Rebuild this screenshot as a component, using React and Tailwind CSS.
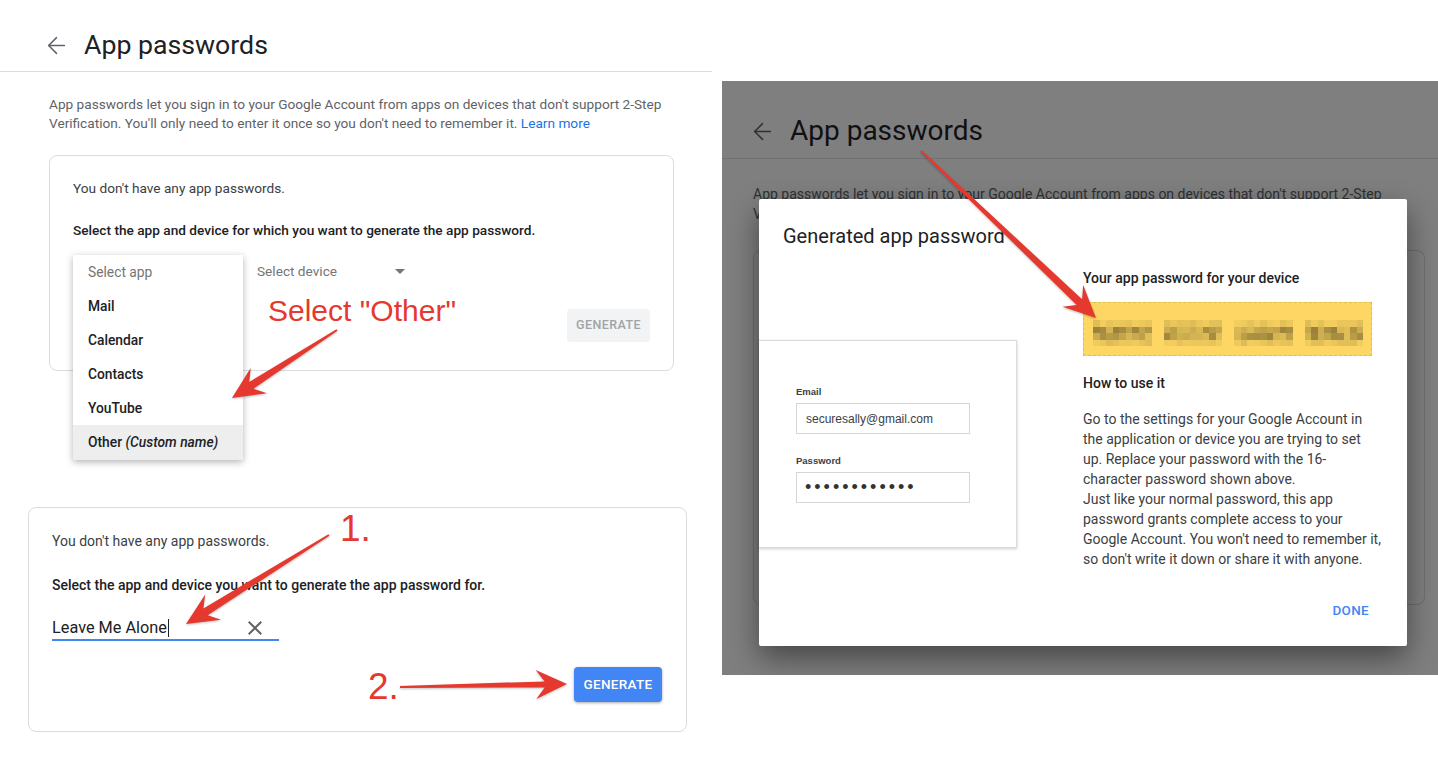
import React from 'react';
import { ArrowLeft } from 'lucide-react';

const RED = '#e5392f';

// Preview-style annotation arrow: thin tail widening to a swept-back head
const arrowPoints = ({ from, to, head = 30, wing = 28, tail = 2, neck = 6 }) => {
  const [x1, y1] = from;
  const [x2, y2] = to;
  const len = Math.hypot(x2 - x1, y2 - y1);
  const ux = (x2 - x1) / len;
  const uy = (y2 - y1) / len;
  const nx = -uy;
  const ny = ux;
  const at = (d, w) => [x2 - ux * d + nx * w, y2 - uy * d + ny * w];
  const pts = [
    [x1 + (nx * tail) / 2, y1 + (ny * tail) / 2],
    at(head * 0.72, neck / 2),
    at(head, wing / 2),
    [x2, y2],
    at(head, -wing / 2),
    at(head * 0.72, -neck / 2),
    [x1 - (nx * tail) / 2, y1 - (ny * tail) / 2],
  ];
  return pts.map((p) => p.map((v) => v.toFixed(1)).join(',')).join(' ');
};

const arrows = [
  { from: [337, 330], to: [232, 398], head: 32, wing: 30, neck: 8 },
  { from: [329, 535], to: [186, 624], head: 32, wing: 30, neck: 8 },
  { from: [400, 687], to: [567, 684], head: 31, wing: 29, neck: 6 },
  { from: [921, 151], to: [1096, 318], head: 32, wing: 30, neck: 8 },
];

// pixelated stand-in for the blurred password
const mosaic = Array.from({ length: 4 }, (_, g) =>
  Array.from({ length: 36 }, (_, i) => {
    const row = Math.floor(i / 9);
    const s = Math.sin((g * 36 + i + 1) * 12.9898) * 43758.5453;
    const rnd = s - Math.floor(s);
    const edge = row === 0 || row === 3;
    const t = edge ? 0.06 + rnd * 0.14 : 0.18 + rnd * 0.45;
    const mix = (a, b) => Math.round(a + (b - a) * t);
    return `rgb(${mix(253, 95)}, ${mix(214, 80)}, ${mix(99, 35)})`;
  })
);

const CloseIcon = () => (
  <svg width="24" height="24" viewBox="0 0 24 24" fill="#5f6368">
    <path d="M19 6.41L17.59 5 12 10.59 6.41 5 5 6.41 10.59 12 5 17.59 6.41 19 12 13.41 17.59 19 19 17.59 13.41 12z" />
  </svg>
);

const LeftPage = () => (
  <div className="w-[712px] shrink-0">
    {/* Header */}
    <div className="h-[72px] border-b border-[#dadce0] pt-[29px] pl-[43px]">
      <div className="flex items-center h-[32px]">
        <ArrowLeft size={27} strokeWidth={1.3} color="#5f6368" />
        <h1 className="ml-[14px] text-[26.7px] leading-[32px] text-[#202124]">App passwords</h1>
      </div>
    </div>

    <p className="mt-[23px] px-[49px] text-[13.65px] leading-[19px] text-[#5f6368] whitespace-nowrap">
      App passwords let you sign in to your Google Account from apps on devices that don't support 2-Step
      <br />
      Verification. You'll only need to enter it once so you don't need to remember it.{' '}
      <span className="text-[#1a73e8]">Learn more</span>
    </p>

    {/* Card with open app menu */}
    <div className="relative ml-[49px] mt-[22px] w-[625px] h-[216px] border border-[#dadce0] rounded-[8px] pl-[23px] pt-[23px]">
      <p className="text-[13.65px] leading-[19px] text-[#3c4043]">You don't have any app passwords.</p>
      <p className="mt-[23px] text-[13.65px] leading-[19px] font-medium text-[#202124]">
        Select the app and device for which you want to generate the app password.
      </p>
      <div className="mt-[22px] flex items-center h-[19px] text-[13.65px]">
        <div className="w-[184px]" />
        <span className="w-[138px] text-[#757575]">Select device</span>
        <svg width="10" height="5" viewBox="0 0 10 5">
          <polygon points="0,0 10,0 5,5" fill="#757575" />
        </svg>
      </div>
      <div className="mt-[28px] flex justify-end pr-[23px]">
        <button className="w-[83px] h-[33px] rounded-[4px] bg-[#f1f3f4] text-[#a0a4a8] text-[12.5px] font-medium tracking-[0.4px]">
          GENERATE
        </button>
      </div>

      <div className="absolute left-[23px] top-[99px] w-[170px] bg-white shadow-[0_2px_7px_rgba(0,0,0,0.3)] text-[13.8px]">
        <div className="h-[34px] flex items-center pl-[15px] text-[#757575]">Select app</div>
        {['Mail', 'Calendar', 'Contacts', 'YouTube'].map((item) => (
          <div key={item} className="h-[34px] flex items-center pl-[15px] font-medium text-[#202124]">
            {item}
          </div>
        ))}
        <div className="h-[35px] flex items-center pl-[15px] font-medium text-[#202124] bg-[#eeeeee]">
          Other&nbsp;<span className="italic">(Custom name)</span>
        </div>
      </div>
    </div>

    {/* Card with custom name */}
    <div className="ml-[28px] mt-[136px] w-[659px] h-[225px] border border-[#dadce0] rounded-[8px] pl-[23px] pt-[24px]">
      <p className="text-[14px] leading-[19px] text-[#3c4043]">You don't have any app passwords.</p>
      <p className="mt-[25px] text-[14px] leading-[19px] font-medium text-[#202124]">
        Select the app and device you want to generate the app password for.
      </p>
      <div className="mt-[22px] w-[227px] h-[24px] border-b-2 border-[#4285f4] flex items-center justify-between pr-[12px]">
        <div className="flex items-center text-[16.3px] leading-[22px] text-[#202124]">
          Leave Me Alone
          <span className="ml-[1px] w-[1px] h-[18px] bg-[#202124]" />
        </div>
        <CloseIcon />
      </div>
      <div className="mt-[26px] flex justify-end pr-[24px]">
        <button className="w-[88px] h-[35px] rounded-[4px] bg-[#4285f4] text-white text-[13.5px] font-medium tracking-[0.3px] shadow-[0_1px_3px_rgba(0,0,0,0.35)]">
          GENERATE
        </button>
      </div>
    </div>
  </div>
);

const GeneratedDialog = () => (
  <div className="absolute left-[37px] top-[118px] w-[648px] h-[447px] bg-white rounded-[2px] shadow-[0_12px_30px_rgba(0,0,0,0.45)]">
    <h2 className="pl-[24px] pt-[24px] text-[20px] leading-[26px] text-[#202124]">Generated app password</h2>
    <div className="mt-[20px] flex">
      <div className="w-[324px] shrink-0">
        <div className="mt-[71px] w-[258px] h-[208px] bg-white border border-l-0 border-[#dcdcdc] shadow-[0_1px_3px_rgba(0,0,0,0.2)] pl-[37px] pt-[45px] font-['Liberation_Sans',Arial,sans-serif]">
          <div className="text-[9.5px] leading-[12px] font-bold text-[#3c4043]">Email</div>
          <div className="mt-[5px] w-[174px] h-[31px] border border-[#d6d6d6] pl-[9px] flex items-center text-[12px] text-[#3c4043]">
            securesally@gmail.com
          </div>
          <div className="mt-[21px] text-[9.5px] leading-[12px] font-bold text-[#3c4043]">Password</div>
          <div className="mt-[5px] w-[174px] h-[31px] border border-[#d6d6d6] pl-[8px] flex items-center text-[18px] tracking-[3px] text-[#333333]">
            ••••••••••••
          </div>
        </div>
      </div>
      <div className="w-[310px] text-[14px] text-[#3c4043]">
        <p className="leading-[19px] font-medium text-[#202124]">Your app password for your device</p>
        <div className="mt-[14px] w-[289px] h-[54px] bg-[#fdd663] border border-dashed border-[#e2bd4f] pl-[9px] pt-[17px] flex gap-[12px]">
          {mosaic.map((cells, g) => (
            <div key={g} className="grid grid-cols-[repeat(9,6.5px)] auto-rows-[6.5px]">
              {cells.map((c, i) => (
                <div key={i} style={{ background: c }} />
              ))}
            </div>
          ))}
        </div>
        <p className="mt-[18px] leading-[19px] font-medium text-[#202124]">How to use it</p>
        <p className="mt-[16px] leading-[20px] whitespace-nowrap">
          Go to the settings for your Google Account in
          <br />
          the application or device you are trying to set
          <br />
          up. Replace your password with the 16-
          <br />
          character password shown above.
          <br />
          Just like your normal password, this app
          <br />
          password grants complete access to your
          <br />
          Google Account. You won't need to remember it,
          <br />
          so don't write it down or share it with anyone.
        </p>
      </div>
    </div>
    <div className="mt-[32px] flex justify-end pr-[38px]">
      <span className="text-[13.5px] leading-[19px] font-medium text-[#4285f4] tracking-[0.3px]">DONE</span>
    </div>
  </div>
);

const RightShot = () => (
  <div className="pl-[10px] pt-[81px]">
    <div className="relative w-[716px] h-[594px] bg-[#7f7f7f] overflow-hidden">
      {/* dimmed page behind the dialog */}
      <div className="h-[78px] border-b border-[#717171] pt-[34px] pl-[27px]">
        <div className="flex items-center h-[32px]">
          <ArrowLeft size={27} strokeWidth={1.3} color="#2f3133" />
          <span className="ml-[14px] text-[28px] leading-[32px] text-[#101012]">App passwords</span>
        </div>
      </div>
      <p className="mt-[26px] pl-[31px] text-[14px] leading-[19.5px] text-[#2e3133] whitespace-nowrap">
        App passwords let you sign in to your Google Account from apps on devices that don't support 2-Step
        <br />
        Verification.
      </p>
      <div className="ml-[31px] mt-[26px] w-[672px] h-[355px] border border-[#6d6e70] rounded-[8px]" />

      <GeneratedDialog />
    </div>
  </div>
);

export default function App() {
  return (
    <div className="relative w-[1438px] h-[761px] overflow-hidden bg-white flex font-['Roboto','Liberation_Sans',sans-serif]">
      <LeftPage />
      <RightShot />

      {/* red annotations */}
      <svg
        className="absolute inset-0 pointer-events-none drop-shadow-[0_1px_1px_rgba(0,0,0,0.25)]"
        width="1438"
        height="761"
        viewBox="0 0 1438 761"
      >
        {arrows.map((a, i) => (
          <polygon key={i} points={arrowPoints(a)} fill={RED} />
        ))}
      </svg>
      <div className="absolute left-[268px] top-[296px] text-[30px] leading-none text-[#e5392f] font-['Liberation_Sans',Arial,sans-serif]">
        Select "Other"
      </div>
      <div className="absolute left-[340px] top-[510px] text-[37px] leading-none text-[#e5392f] font-['Liberation_Sans',Arial,sans-serif]">
        1.
      </div>
      <div className="absolute left-[368px] top-[668px] text-[37px] leading-none text-[#e5392f] font-['Liberation_Sans',Arial,sans-serif]">
        2.
      </div>
    </div>
  );
}
